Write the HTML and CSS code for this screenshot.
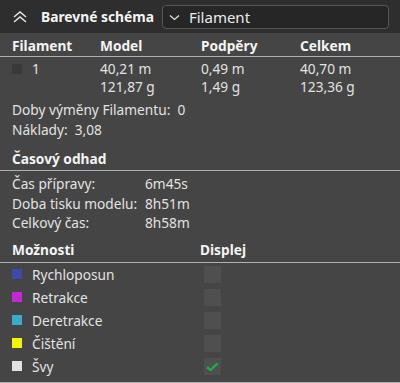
FILE: index.html
```html
<!DOCTYPE html>
<html lang="cs">
  <head>
    <meta charset="UTF-8" />
    <title>Barevné schéma</title>
    <link rel="stylesheet" href="styles.css">
  </head>
  <body>
    <div class="panel">
      <header class="bar">
        <svg class="collapse" width="16" height="12" viewBox="0 0 16 12">
          <path d="M2 6 L8 1 L14 6 M2 11 L8 6 L14 11" fill="none" stroke="#e8e8e8" stroke-width="1.4"/>
        </svg>
        <span class="bar-title">Barevné schéma</span>
        <div class="combo">
          <svg width="11" height="7" viewBox="0 0 11 7">
            <path d="M1 1.5 L5.5 5.5 L10 1.5" fill="none" stroke="#e0e0e0" stroke-width="1.3"/>
          </svg>
          <span>Filament</span>
        </div>
      </header>

      <div class="grid head">
        <span>Filament</span><span>Model</span><span>Podpěry</span><span>Celkem</span>
      </div>
      <div class="grid row">
        <span class="fil"><i class="swatch dark"></i>1</span>
        <span>40,21 m<br>121,87 g</span>
        <span>0,49 m<br>1,49 g</span>
        <span>40,70 m<br>123,36 g</span>
      </div>

      <div class="info">
        <p>Doby výměny Filamentu:&nbsp; 0</p>
        <p>Náklady:&nbsp; 3,08</p>
      </div>

      <div class="section">Časový odhad</div>
      <div class="times">
        <span>Čas přípravy:</span><span>6m45s</span>
        <span>Doba tisku modelu:</span><span>8h51m</span>
        <span>Celkový čas:</span><span>8h58m</span>
      </div>

      <div class="section opts-head"><span>Možnosti</span><span>Displej</span></div>
      <ul class="opts">
        <li><span><i class="swatch" style="background:#3c4aa8"></i>Rychloposun</span><b class="check"></b></li>
        <li><span><i class="swatch" style="background:#c32ad6"></i>Retrakce</span><b class="check"></b></li>
        <li><span><i class="swatch" style="background:#3fa8cf"></i>Deretrakce</span><b class="check"></b></li>
        <li><span><i class="swatch" style="background:#f2f20a"></i>Čištění</span><b class="check"></b></li>
        <li><span><i class="swatch" style="background:#e2e2e2"></i>Švy</span>
          <b class="check">
            <svg width="17" height="17" viewBox="0 0 17 17">
              <path d="M3 9 L6.5 12 L13.5 5.5" fill="none" stroke="#1faa4a" stroke-width="2.4"/>
            </svg>
          </b>
        </li>
      </ul>
    </div>
  </body>
</html>
```

FILE: styles.css
```css
body {
  margin: 0;
  background: #454545;
  font-family: "Noto Sans", sans-serif;
  font-size: 13.7px;
  color: #e2e2e2;
}

.panel {
  width: 400px;
  height: 383px;
  background: #454545;
  border-bottom: 1px solid #b0b0b0;
  box-sizing: border-box;
  overflow: hidden;
}

.bar {
  height: 33px;
  background: #2e2e2e;
  display: flex;
  align-items: center;
  padding: 0 11px 0 12px;
}

.collapse {
  margin-right: 13px;
}

.bar-title {
  font-weight: bold;
  font-size: 13.8px;
  color: #f4f4f4;
  margin-right: 8px;
}

.combo {
  flex: 1;
  height: 22px;
  margin-top: 1px;
  background: #262626;
  border: 1px solid #555;
  border-radius: 4px;
  display: flex;
  align-items: center;
  padding-left: 6px;
  font-size: 15px;
  color: #ececec;
}

.combo svg {
  margin-right: 9px;
}

.grid {
  display: grid;
  grid-template-columns: 88px 101px 99px 1fr;
  padding-left: 12px;
}

.head {
  height: 22px;
  padding-top: 1px;
  align-items: center;
  font-weight: bold;
  color: #f4f4f4;
  border-bottom: 1px solid #b0b0b0;
}

.row {
  padding-top: 3px;
  line-height: 18px;
}

.fil {
  display: flex;
  align-items: flex-start;
}

.fil .swatch {
  margin: 4px 10px 0 0;
}

.swatch {
  display: inline-block;
  width: 10px;
  height: 10px;
  flex: none;
}

.swatch.dark {
  background: #393939;
}

.info {
  padding: 4px 12px 0;
}

.info p {
  margin: 0;
  height: 20px;
  line-height: 20px;
}

.section {
  margin-top: 6px;
  height: 24px;
  padding: 0 12px;
  display: flex;
  align-items: center;
  font-weight: bold;
  color: #f4f4f4;
  border-bottom: 1px solid #b0b0b0;
}

.times {
  display: grid;
  grid-template-columns: 133px 1fr;
  padding: 3px 12px 0;
  line-height: 19.5px;
}

.opts-head {
  margin-top: 5px;
  height: 24px;
}

.opts-head span:first-child {
  width: 188px;
}

.opts {
  list-style: none;
  margin: 0;
  padding: 0 12px;
}

.opts li {
  height: 23px;
  display: flex;
  align-items: center;
}

.opts li > span {
  width: 192px;
  display: flex;
  align-items: center;
}

.opts .swatch {
  margin-right: 10px;
}

.check {
  width: 17px;
  height: 17px;
  background: #4f4f4f;
  display: block;
}

.check svg {
  display: block;
}
```
